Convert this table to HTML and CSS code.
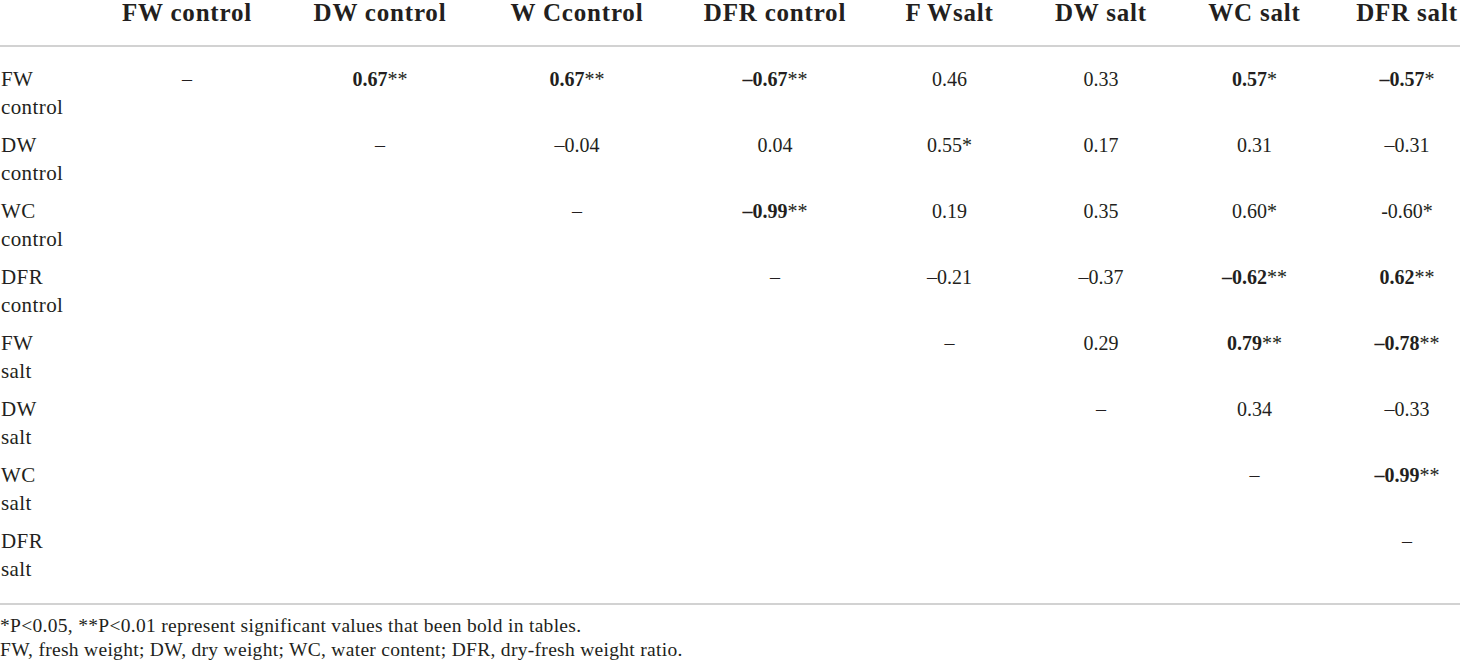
FILE: index.html
```html
<!DOCTYPE html>
<html lang="en">
<head>
<meta charset="utf-8">
<title>Correlation table</title>
<link rel="stylesheet" href="styles.css">
</head>
<body>
<div class="table-wrap">
  <table class="corr">
    <colgroup>
      <col class="c-label">
      <col class="c-ctrl1">
      <col class="c-ctrl2">
      <col class="c-ctrl3">
      <col class="c-ctrl4">
      <col class="c-salt1">
      <col class="c-salt2">
      <col class="c-salt3">
      <col class="c-salt4">
    </colgroup>
    <thead>
      <tr>
        <th class="label"></th>
        <th>FW control</th>
        <th>DW control</th>
        <th>W Ccontrol</th>
        <th>DFR control</th>
        <th>F Wsalt</th>
        <th>DW salt</th>
        <th>WC salt</th>
        <th>DFR salt</th>
      </tr>
    </thead>
    <tbody>
      <tr>
        <td class="label">FW<br>control</td>
        <td>–</td>
        <td><b>0.67</b>**</td>
        <td><b>0.67</b>**</td>
        <td><b>–0.67</b>**</td>
        <td>0.46</td>
        <td>0.33</td>
        <td><b>0.57</b>*</td>
        <td><b>–0.57</b>*</td>
      </tr>
      <tr>
        <td class="label">DW<br>control</td>
        <td></td>
        <td>–</td>
        <td>–0.04</td>
        <td>0.04</td>
        <td>0.55*</td>
        <td>0.17</td>
        <td>0.31</td>
        <td>–0.31</td>
      </tr>
      <tr>
        <td class="label">WC<br>control</td>
        <td></td>
        <td></td>
        <td>–</td>
        <td><b>–0.99</b>**</td>
        <td>0.19</td>
        <td>0.35</td>
        <td>0.60*</td>
        <td>-0.60*</td>
      </tr>
      <tr>
        <td class="label">DFR<br>control</td>
        <td></td>
        <td></td>
        <td></td>
        <td>–</td>
        <td>–0.21</td>
        <td>–0.37</td>
        <td><b>–0.62</b>**</td>
        <td><b>0.62</b>**</td>
      </tr>
      <tr>
        <td class="label">FW<br>salt</td>
        <td></td>
        <td></td>
        <td></td>
        <td></td>
        <td>–</td>
        <td>0.29</td>
        <td><b>0.79</b>**</td>
        <td><b>–0.78</b>**</td>
      </tr>
      <tr>
        <td class="label">DW<br>salt</td>
        <td></td>
        <td></td>
        <td></td>
        <td></td>
        <td></td>
        <td>–</td>
        <td>0.34</td>
        <td>–0.33</td>
      </tr>
      <tr>
        <td class="label">WC<br>salt</td>
        <td></td>
        <td></td>
        <td></td>
        <td></td>
        <td></td>
        <td></td>
        <td>–</td>
        <td><b>–0.99</b>**</td>
      </tr>
      <tr>
        <td class="label">DFR<br>salt</td>
        <td></td>
        <td></td>
        <td></td>
        <td></td>
        <td></td>
        <td></td>
        <td></td>
        <td>–</td>
      </tr>
    </tbody>
  </table>
</div>
<div class="notes">
  <p>*P&lt;0.05, **P&lt;0.01 represent significant values that been bold in tables.</p>
  <p>FW, fresh weight; DW, dry weight; WC, water content; DFR, dry-fresh weight ratio.</p>
</div>
</body>
</html>
```
FILE: styles.css
```css
html, body {
  margin: 0;
  padding: 0;
  background: #ffffff;
}

body {
  font-family: "Liberation Serif", "Times New Roman", serif;
  color: #231f20;
  overflow: hidden;
}

.table-wrap {
  width: 1460px;
  overflow: hidden;
}

.corr {
  width: 1482px;
  table-layout: fixed;
  border-collapse: collapse;
  border-spacing: 0;
}

.c-label { width: 92px; }
.c-ctrl1 { width: 190px; }
.c-ctrl2 { width: 196px; }
.c-ctrl3 { width: 198px; }
.c-ctrl4 { width: 198px; }
.c-salt1 { width: 151px; }
.c-salt2 { width: 152px; }
.c-salt3 { width: 155px; }
.c-salt4 { width: 150px; }

.corr th {
  font-size: 25px;
  font-weight: bold;
  letter-spacing: 0.8px;
  line-height: 25px;
  padding: 0 0 20px;
  text-align: center;
  white-space: nowrap;
  border-bottom: 2px solid #d2d2d2;
}

.corr td {
  font-size: 20px;
  line-height: 28px;
  padding: 5px 0;
  text-align: center;
  vertical-align: top;
  white-space: nowrap;
}

.corr td.label {
  font-size: 21px;
  letter-spacing: 0.4px;
  text-align: left;
  padding-left: 1px;
}

.corr td b {
  font-weight: bold;
}

.corr tbody tr:first-child td {
  padding-top: 18px;
}

.corr tbody tr:last-child td {
  padding-bottom: 20px;
  border-bottom: 2px solid #d2d2d2;
}

.notes {
  margin-top: 9px;
  font-size: 19.5px;
  letter-spacing: 0.3px;
  line-height: 24px;
}

.notes p {
  margin: 0;
}
```
